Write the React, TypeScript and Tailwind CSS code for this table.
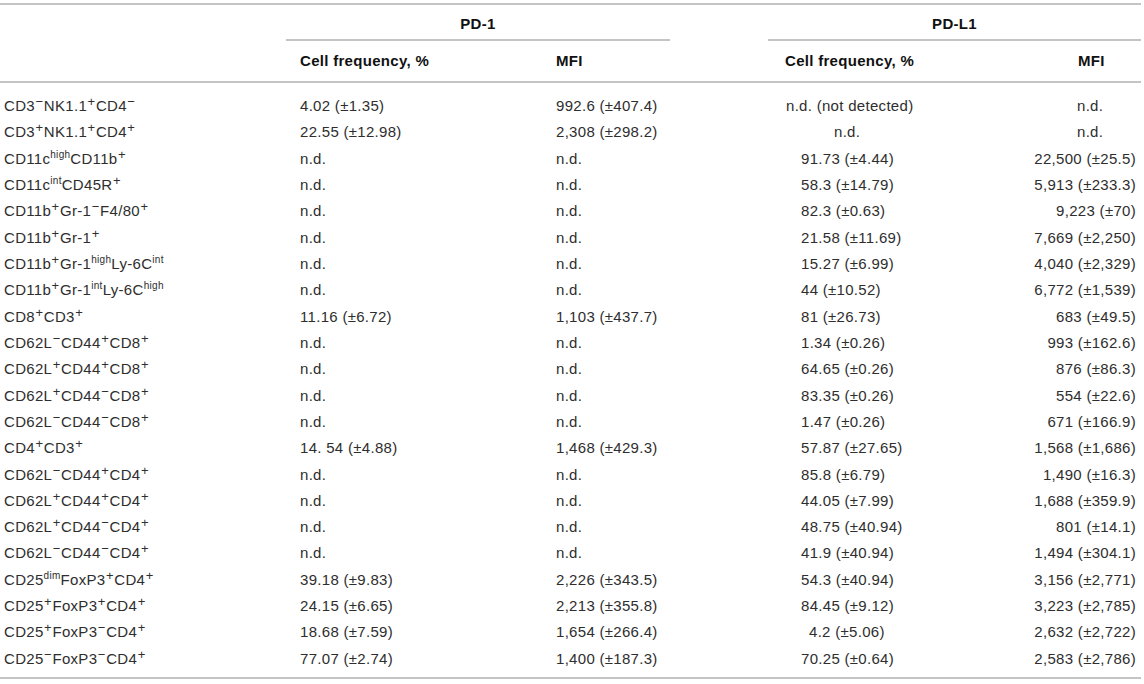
type Part = [string, string];

interface Row {
  label: Part[];
  pdFreq: string;
  pdMfi: string;
  plFreq: string;
  plMfi: string;
  indent?: boolean;
}

const nd = "n.d.";

const rows: Row[] = [
  { label: [["CD3", "−"], ["NK1.1", "+"], ["CD4", "−"]], pdFreq: "4.02 (±1.35)", pdMfi: "992.6 (±407.4)", plFreq: "n.d. (not detected)", plMfi: nd },
  { label: [["CD3", "+"], ["NK1.1", "+"], ["CD4", "+"]], pdFreq: "22.55 (±12.98)", pdMfi: "2,308 (±298.2)", plFreq: nd, plMfi: nd },
  { label: [["CD11c", "high"], ["CD11b", "+"]], pdFreq: nd, pdMfi: nd, plFreq: "91.73 (±4.44)", plMfi: "22,500 (±25.5)" },
  { label: [["CD11c", "int"], ["CD45R", "+"]], pdFreq: nd, pdMfi: nd, plFreq: "58.3 (±14.79)", plMfi: "5,913 (±233.3)" },
  { label: [["CD11b", "+"], ["Gr-1", "−"], ["F4/80", "+"]], pdFreq: nd, pdMfi: nd, plFreq: "82.3 (±0.63)", plMfi: "9,223 (±70)" },
  { label: [["CD11b", "+"], ["Gr-1", "+"]], pdFreq: nd, pdMfi: nd, plFreq: "21.58 (±11.69)", plMfi: "7,669 (±2,250)" },
  { label: [["CD11b", "+"], ["Gr-1", "high"], ["Ly-6C", "int"]], pdFreq: nd, pdMfi: nd, plFreq: "15.27 (±6.99)", plMfi: "4,040 (±2,329)" },
  { label: [["CD11b", "+"], ["Gr-1", "int"], ["Ly-6C", "high"]], pdFreq: nd, pdMfi: nd, plFreq: "44 (±10.52)", plMfi: "6,772 (±1,539)" },
  { label: [["CD8", "+"], ["CD3", "+"]], pdFreq: "11.16 (±6.72)", pdMfi: "1,103 (±437.7)", plFreq: "81 (±26.73)", plMfi: "683 (±49.5)" },
  { label: [["CD62L", "−"], ["CD44", "+"], ["CD8", "+"]], pdFreq: nd, pdMfi: nd, plFreq: "1.34 (±0.26)", plMfi: "993 (±162.6)" },
  { label: [["CD62L", "+"], ["CD44", "+"], ["CD8", "+"]], pdFreq: nd, pdMfi: nd, plFreq: "64.65 (±0.26)", plMfi: "876 (±86.3)" },
  { label: [["CD62L", "+"], ["CD44", "−"], ["CD8", "+"]], pdFreq: nd, pdMfi: nd, plFreq: "83.35 (±0.26)", plMfi: "554 (±22.6)" },
  { label: [["CD62L", "−"], ["CD44", "−"], ["CD8", "+"]], pdFreq: nd, pdMfi: nd, plFreq: "1.47 (±0.26)", plMfi: "671 (±166.9)" },
  { label: [["CD4", "+"], ["CD3", "+"]], pdFreq: "14. 54 (±4.88)", pdMfi: "1,468 (±429.3)", plFreq: "57.87 (±27.65)", plMfi: "1,568 (±1,686)" },
  { label: [["CD62L", "−"], ["CD44", "+"], ["CD4", "+"]], pdFreq: nd, pdMfi: nd, plFreq: "85.8 (±6.79)", plMfi: "1,490 (±16.3)" },
  { label: [["CD62L", "+"], ["CD44", "+"], ["CD4", "+"]], pdFreq: nd, pdMfi: nd, plFreq: "44.05 (±7.99)", plMfi: "1,688 (±359.9)" },
  { label: [["CD62L", "+"], ["CD44", "−"], ["CD4", "+"]], pdFreq: nd, pdMfi: nd, plFreq: "48.75 (±40.94)", plMfi: "801 (±14.1)" },
  { label: [["CD62L", "−"], ["CD44", "−"], ["CD4", "+"]], pdFreq: nd, pdMfi: nd, plFreq: "41.9 (±40.94)", plMfi: "1,494 (±304.1)" },
  { label: [["CD25", "dim"], ["FoxP3", "+"], ["CD4", "+"]], pdFreq: "39.18 (±9.83)", pdMfi: "2,226 (±343.5)", plFreq: "54.3 (±40.94)", plMfi: "3,156 (±2,771)" },
  { label: [["CD25", "+"], ["FoxP3", "+"], ["CD4", "+"]], pdFreq: "24.15 (±6.65)", pdMfi: "2,213 (±355.8)", plFreq: "84.45 (±9.12)", plMfi: "3,223 (±2,785)" },
  { label: [["CD25", "+"], ["FoxP3", "−"], ["CD4", "+"]], pdFreq: "18.68 (±7.59)", pdMfi: "1,654 (±266.4)", plFreq: "4.2 (±5.06)", plMfi: "2,632 (±2,722)", indent: true },
  { label: [["CD25", "−"], ["FoxP3", "−"], ["CD4", "+"]], pdFreq: "77.07 (±2.74)", pdMfi: "1,400 (±187.3)", plFreq: "70.25 (±0.64)", plMfi: "2,583 (±2,786)" },
];

const cols = "grid grid-cols-[286px_254px_130px_98px_242px_131px]";

const Marker = ({ parts }: { parts: Part[] }) => (
  <span>
    {parts.map(([base, sup], i) => (
      <span key={i}>
        {base}
        <sup className={sup.length > 1 ? "text-[10px] -top-[6px]" : "text-[13px] -top-[5px] px-[0.5px]"}>{sup}</sup>
      </span>
    ))}
  </span>
);

export default function App() {
  return (
    <div className="w-[1144px] h-[684px] bg-white pt-[3px] font-['Liberation_Sans',Arial,sans-serif] text-[15px] tracking-[0.3px] text-[#2e2e2e]">
      <div className="w-[1141px] border-t-2 border-b-2 border-[#c4c4c4]">
        {/* Header */}
        <div className={`${cols} border-b-2 border-[#c4c4c4] font-bold text-[#111]`}>
          <div />
          <div className="col-span-2 h-[36px] pt-[5px] flex items-center justify-center border-b-2 border-[#c4c4c4]">
            PD-1
          </div>
          <div />
          <div className="col-span-2 h-[36px] pt-[5px] flex items-center justify-center border-b-2 border-[#c4c4c4]">
            PD-L1
          </div>

          <div className="h-[40px]" />
          <div className="h-[40px] pl-[14px] flex items-center">Cell frequency, %</div>
          <div className="h-[40px] pl-[16px] flex items-center">MFI</div>
          <div />
          <div className="h-[40px] pl-[17px] flex items-center">Cell frequency, %</div>
          <div className="h-[40px] pl-[68px] flex items-center">MFI</div>
        </div>

        {/* Body */}
        <div className="pt-[10px] pb-[5px]">
          {rows.map((r, i) => (
            <div key={i} className={`${cols} h-[26.33px] items-center whitespace-nowrap`}>
              <div className="pl-[4px]">
                <Marker parts={r.label} />
              </div>
              <div className="pl-[14px]">{r.pdFreq}</div>
              <div className="pl-[16px]">{r.pdMfi}</div>
              <div />
              <div
                className={
                  r.plFreq === nd
                    ? "pl-[66px]"
                    : r.plFreq.startsWith("n.d.")
                    ? "pl-[18px]"
                    : r.indent
                    ? "pl-[41px]"
                    : "pl-[33px]"
                }
              >
                {r.plFreq}
              </div>
              <div className={r.plMfi === nd ? "pl-[67px]" : "text-right pr-[5px]"}>{r.plMfi}</div>
            </div>
          ))}
        </div>
      </div>
    </div>
  );
}
